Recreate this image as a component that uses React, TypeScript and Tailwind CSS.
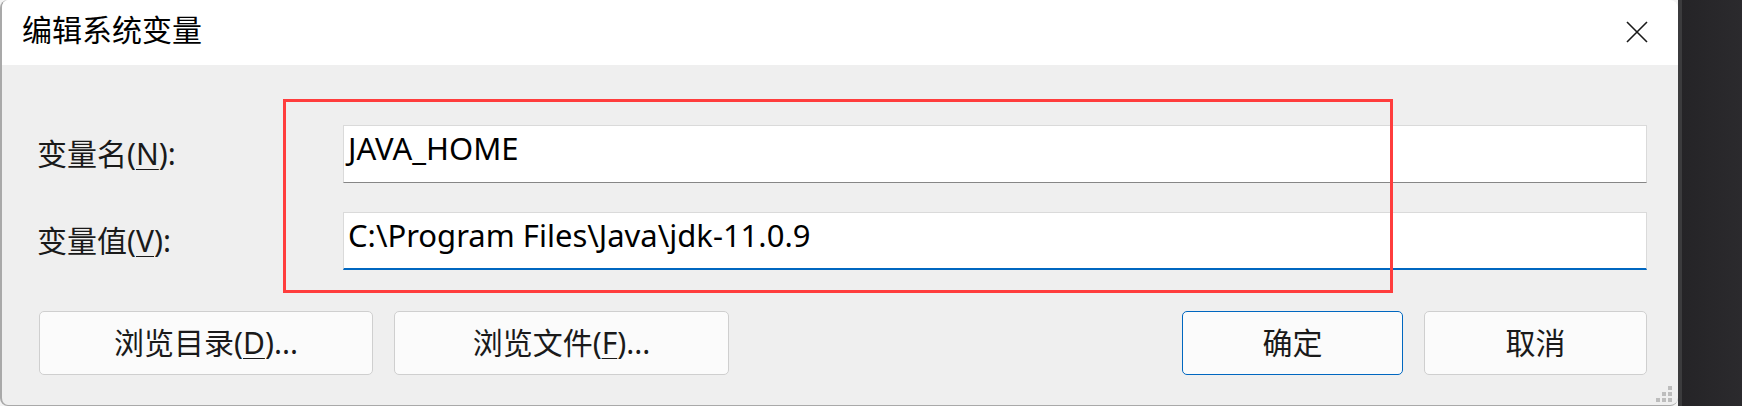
const FONT = "font-['Noto_Sans','Noto_Sans_CJK_SC',sans-serif]";

const Mnemonic = ({ k }: { k: string }) => (
  <span className="underline decoration-1 underline-offset-[4px]">{k}</span>
);

const FieldRow = ({
  label,
  mnemonic,
  value,
  focused,
}: {
  label: string;
  mnemonic: string;
  value: string;
  focused?: boolean;
}) => (
  <div className="grid grid-cols-[306px_1fr] items-center">
    <div className="text-[30px] leading-[40px] text-[#1a1a1a]">
      {label}(<Mnemonic k={mnemonic} />):
    </div>
    <div
      className={
        "h-[58px] border border-[#dadada] bg-white pl-[4px] pt-[2px] text-[31px] leading-[40px] text-black " +
        (focused ? "border-b-2 border-b-[#0067c0]" : "border-b-[#868686]")
      }
    >
      {value}
    </div>
  </div>
);

const DialogButton = ({
  children,
  primary,
  width,
}: {
  children: React.ReactNode;
  primary?: boolean;
  width: string;
}) => (
  <button
    type="button"
    className={
      "flex h-[64px] items-center justify-center rounded-[5px] border bg-[#fbfbfb] text-[30px] leading-[40px] text-[#1a1a1a] " +
      width +
      " " +
      (primary ? "border-[#0067c0]" : "border-[#cfcfcf]")
    }
  >
    {children}
  </button>
);

export default function App() {
  return (
    <div className={"relative flex h-[406px] w-[1742px] overflow-hidden bg-[#f4f4f4] " + FONT}>
      {/* dialog window */}
      <div className="flex h-[406px] w-[1678px] flex-col overflow-hidden rounded-[8px] border-l-2 border-b border-[#a9a9a9] bg-[#efefef]">
        <div className="flex h-[65px] shrink-0 items-center justify-between bg-white pl-[20px] pr-[30px] pb-[6px]">
          <span className="text-[30px] leading-[40px] text-black">编辑系统变量</span>
          <svg width="22" height="22" viewBox="0 0 22 22" className="mt-[4px]">
            <path d="M1 1 L21 21 M21 1 L1 21" stroke="#1a1a1a" strokeWidth="1.6" />
          </svg>
        </div>

        <div className="flex flex-col gap-[29px] pl-[35px] pr-[31px] pt-[60px]">
          <FieldRow label="变量名" mnemonic="N" value="JAVA_HOME" />
          <FieldRow label="变量值" mnemonic="V" value="C:\Program Files\Java\jdk-11.0.9" focused />
        </div>

        <div className="flex pl-[37px] pr-[31px] pt-[41px]">
          <div className="flex gap-[21px]">
            <DialogButton width="w-[334px]">
              浏览目录(<Mnemonic k="D" />)...
            </DialogButton>
            <DialogButton width="w-[335px]">
              浏览文件(<Mnemonic k="F" />)...
            </DialogButton>
          </div>
          <div className="ml-auto flex gap-[21px]">
            <DialogButton width="w-[221px]" primary>
              确定
            </DialogButton>
            <DialogButton width="w-[223px]">取消</DialogButton>
          </div>
        </div>

        {/* resize grip */}
        <div className="mt-auto mb-[3px] mr-[6px] grid grid-cols-3 gap-[2px] self-end">
          <span />
          <span />
          <span className="size-[4px] bg-[#bdbdbd]" />
          <span />
          <span className="size-[4px] bg-[#bdbdbd]" />
          <span className="size-[4px] bg-[#bdbdbd]" />
          <span className="size-[4px] bg-[#bdbdbd]" />
          <span className="size-[4px] bg-[#bdbdbd]" />
          <span className="size-[4px] bg-[#bdbdbd]" />
        </div>
      </div>

      <div className="w-[4px] bg-[#3b3b3d]" />
      <div className="flex-1 bg-gradient-to-r from-[#252427] to-[#2b2a2d]" />

      {/* red annotation box */}
      <div className="pointer-events-none absolute left-[283px] top-[99px] h-[194px] w-[1110px] border-[3px] border-[#ff3d3d]" />
    </div>
  );
}
